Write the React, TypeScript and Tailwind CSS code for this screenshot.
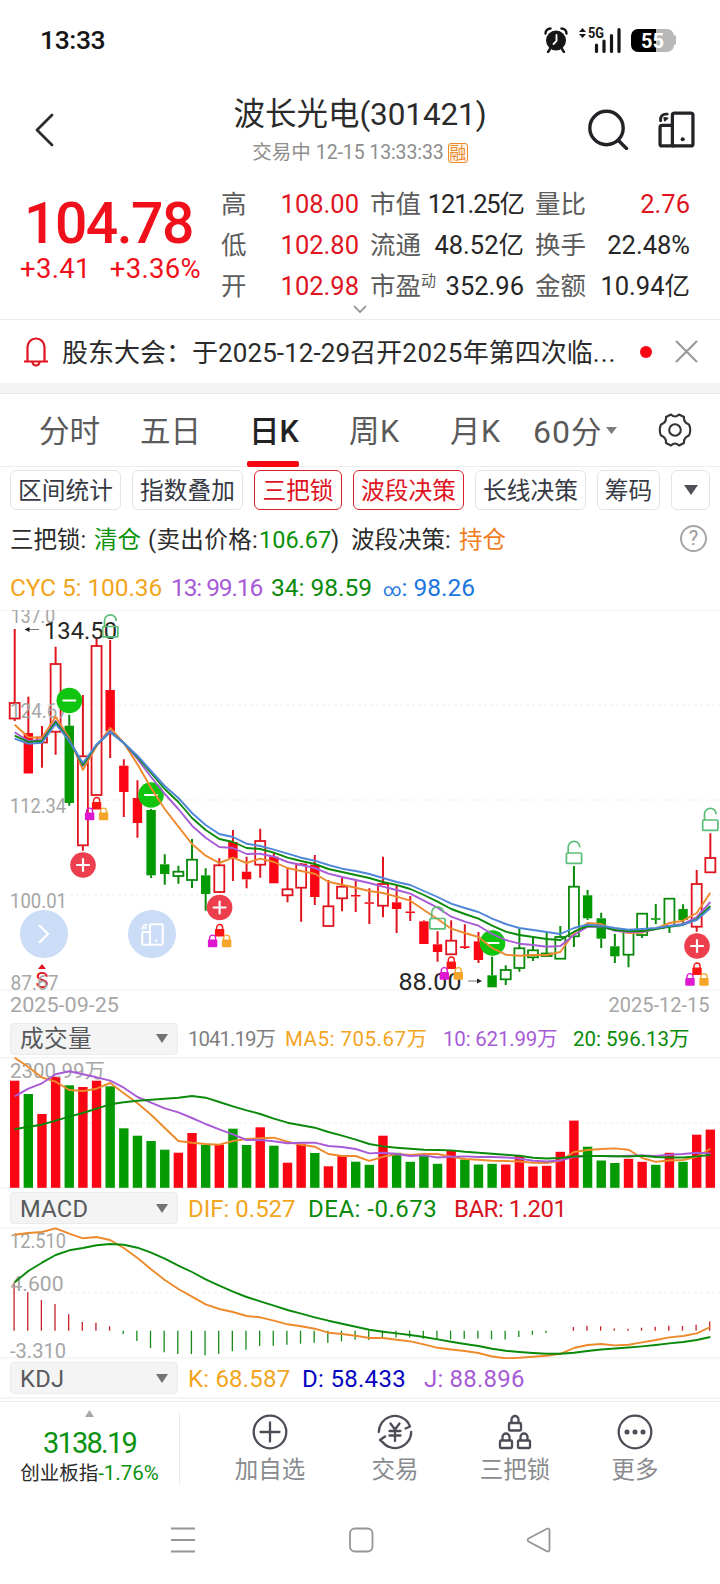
import type { ReactNode } from 'react'

const RED = '#e0141e'
const SOLID_RED = '#fa0514'
const GREEN = '#0a8a0a'
const SOLID_GREEN = '#039a03'
const ORANGE = '#ee8a2c'
const PURPLE = '#a75bd6'
const BLUE = '#4f86d9'

const STEP = 13.64
const cx = (i: number) => 14.7 + STEP * i

// kind: R/G = colour, h = hollow, f = filled, then high, top, bottom, low
type Candle = [string, number, number, number, number]

const candles: Candle[] = [
  ['Rh', 629, 703, 718.5, 721], ['Rf', 696.7, 733, 773.5, 773.5], ['Rh', 726, 737.5, 742.5, 767.7], ['Rh', 646.7, 664, 731.7, 754.7],
  ['Gf', 714.7, 725.7, 803, 805.7], ['Rh', 695, 756.3, 845.3, 850.7], ['Rh', 639, 646, 795, 795], ['Rf', 640, 690, 731, 758],
  ['Rf', 759.3, 765.7, 792, 817], ['Rf', 780.3, 798, 823, 837.7], ['Gf', 809, 810, 875.3, 878], ['Gf', 854.3, 864.3, 874, 884.7],
  ['Gh', 865.7, 871.7, 876, 883.7], ['Gh', 839, 859.7, 880, 888], ['Gf', 868.3, 875.3, 894, 910.7], ['Rh', 858.3, 865.3, 892, 893],
  ['Rf', 830, 842, 858, 881], ['Rf', 856.7, 871.7, 879.3, 888.3], ['Rh', 828.7, 841, 864.7, 877.7], ['Rf', 853, 856.7, 883.3, 883.3],
  ['Rh', 868, 889.3, 895.3, 902.3], ['Rh', 863, 864.5, 887.7, 921.7], ['Rf', 855, 864.7, 897, 905], ['Rh', 880, 906.3, 926, 926],
  ['Rh', 877.7, 886.7, 898.3, 911.3], ['Rf', 880.7, 895, 896.5, 912], ['Rf', 888.3, 902.3, 903.8, 924], ['Rh', 856.7, 884, 905.7, 917.3],
  ['Rf', 885.3, 902.3, 909, 933], ['Rf', 896, 911.5, 913, 921], ['Rf', 920.3, 921.3, 944, 944], ['Rf', 931.3, 944.3, 952, 961.7],
  ['Rh', 920.3, 940.7, 954.3, 954.3], ['Rf', 924.3, 946.3, 948, 949], ['Rf', 932, 941.3, 960, 963], ['Gf', 956.7, 975.3, 987.3, 987.3],
  ['Gh', 965.3, 970, 979.3, 985], ['Gh', 928, 948.3, 968, 971.7], ['Gh', 936.7, 950.3, 957.3, 961], ['Gh', 931.7, 953.5, 956, 956],
  ['Gh', 926, 937, 958.7, 958.7], ['Gh', 866, 886.7, 936.3, 947], ['Gf', 890, 895.3, 918.3, 920], ['Gf', 912.7, 918.3, 938.7, 948],
  ['Gf', 934, 946.3, 956.3, 963], ['Gh', 931, 932, 954.7, 967.3], ['Gh', 913, 913.7, 935, 938], ['Gf', 904, 918.2, 919.8, 924],
  ['Gh', 898, 898.7, 926, 933], ['Gf', 904.3, 909, 920, 923], ['Rh', 870, 884, 926.7, 931.7], ['Rh', 833.3, 858, 872.3, 873],
]

const cyc5 = [724.7, 737.3, 737.7, 716.7, 738, 770, 746, 728, 743, 764.3, 788, 809, 826.7, 844, 855.7, 863, 857.7, 863, 858.7, 862, 868, 871, 873.7, 881.7, 884.7, 887.7, 891, 893, 896.7, 900.7, 910, 919, 928.7, 933, 937, 948, 954.7, 955.7, 955, 955, 952, 933, 923, 924, 930, 933, 932.7, 928.7, 923, 920.7, 913, 892.7]
const cyc13 = [732.3, 741, 740, 720.7, 739.5, 766, 745, 731, 743, 759, 777, 794, 809, 825.7, 837.7, 847, 848, 854, 853.7, 856.7, 862, 865, 868, 873.7, 877, 880, 883, 886.7, 890, 893.7, 900.7, 907.7, 916.7, 921.7, 925.7, 934, 940, 943.7, 945, 946.7, 946, 935, 926.7, 926.7, 930.7, 932, 931.7, 929, 926, 924, 917, 902]
const cyc34 = [735.7, 742, 741, 722, 740, 765, 745, 732, 743, 757, 773, 789, 802, 818, 830, 839, 842, 848, 849, 852.7, 857.7, 861, 864, 869, 872, 875, 878, 882, 885, 889, 895, 901.7, 909, 914, 918.7, 925.7, 931.7, 935, 937, 939, 940, 931.7, 926, 926.3, 930, 931, 931, 929, 926.7, 925, 919, 906]
const cycAll = [738.7, 743.7, 742.7, 724, 741, 763, 744.5, 732, 743, 755.7, 771, 786, 798, 813, 825, 834, 837, 843.7, 846, 849.7, 853.7, 857.7, 860.7, 865, 868.7, 871, 874, 878, 882, 885, 891, 897, 903.7, 908, 912, 918.7, 924, 928, 930, 932, 934, 928, 924.7, 925.7, 928, 929.7, 929, 928, 926, 924.7, 920, 908]

const volColors = 'RGRRGRRGGGGGRRGRGGRGRRGRRGGRGGGGRGGGRRRRRRGGGRRGRGRR'
const volTops = [1080.7, 1094, 1114, 1076.7, 1085.3, 1087, 1080.7, 1086.3, 1128.3, 1135.7, 1141, 1149.7, 1152.7, 1133, 1145, 1144.7, 1128.7, 1145, 1127.3, 1145.7, 1162.7, 1143.7, 1153, 1166.3, 1156, 1161.7, 1164.8, 1135.7, 1152.8, 1161.8, 1156, 1163.8, 1150.8, 1159.5, 1164.5, 1163.8, 1164.5, 1156, 1166.5, 1165.8, 1151.8, 1120.6, 1146.7, 1160.5, 1163, 1158.8, 1161.8, 1164.8, 1152.8, 1161.8, 1134.7, 1129.6]
const vol5 = [1057.7, 1067, 1077.5, 1081.7, 1090, 1091, 1088.7, 1083, 1093.3, 1103.3, 1114.7, 1128, 1141, 1142.7, 1144, 1144.7, 1141, 1139, 1138.3, 1137.7, 1141.7, 1144.7, 1146.7, 1154, 1156, 1156, 1160.8, 1156.8, 1154, 1155, 1154, 1154, 1156.8, 1159, 1159.8, 1160.8, 1161, 1161.5, 1162.8, 1163, 1160.8, 1152, 1150, 1149, 1148.4, 1149.7, 1158, 1161.8, 1160.5, 1160, 1156.8, 1148.7]
const vol10 = [1096.3, 1088.7, 1083.3, 1074.3, 1071.3, 1074.3, 1077.3, 1080.7, 1087.7, 1097, 1102.7, 1108.3, 1112.3, 1118, 1124, 1129.3, 1134.3, 1140, 1140, 1141.3, 1143.3, 1142.7, 1142.7, 1146, 1147, 1149, 1153.4, 1152.8, 1154, 1156, 1155.4, 1157.5, 1156.8, 1156.4, 1157, 1157, 1157.5, 1158.5, 1160.8, 1161.5, 1160.5, 1156.8, 1156, 1156, 1156.4, 1155.8, 1155.4, 1156, 1154.8, 1154, 1152.8, 1153.4]
const vol20 = [1129.3, 1126.7, 1124.7, 1120.7, 1116.7, 1113, 1108.7, 1104.3, 1102.3, 1100.7, 1099.7, 1098.7, 1097.7, 1096, 1097.7, 1102, 1106.3, 1110.3, 1114, 1118.7, 1122.7, 1125.3, 1127.7, 1132, 1135.7, 1139.7, 1144, 1146.4, 1147.7, 1148.7, 1149.7, 1150, 1150.4, 1151.8, 1152.8, 1153.8, 1154.8, 1155.8, 1157.8, 1158.5, 1158, 1156.5, 1156, 1156, 1156.3, 1156.5, 1155.8, 1157, 1157.5, 1157.5, 1156.4, 1155]

const ZERO = 1330.7
const macdBars = [1282.3, 1292.3, 1300, 1304, 1314.3, 1322, 1322.7, 1326.3, 1334, 1341, 1348, 1352.3, 1354, 1354, 1355.3, 1353.7, 1351.3, 1349.7, 1346, 1345.7, 1344.7, 1343.7, 1342.7, 1342.7, 1341.3, 1339.7, 1340, 1337.4, 1337.4, 1337.4, 1338.7, 1339.4, 1339.4, 1338.7, 1338.4, 1339.4, 1339.4, 1337, 1334.7, 1333, 1330.7, 1327, 1325.7, 1326.3, 1328.4, 1328.7, 1327.7, 1326.7, 1325.7, 1326, 1324.7, 1321.6]
const dif = [1234.7, 1233, 1232, 1228.3, 1233.7, 1238.3, 1237, 1240, 1248, 1258, 1269.3, 1280, 1289, 1296.7, 1304.3, 1309, 1312, 1316, 1317.3, 1320.7, 1324.3, 1326.3, 1328.7, 1332.7, 1334, 1335.7, 1338, 1338, 1339.7, 1341.4, 1344.4, 1347.8, 1349.5, 1351, 1353, 1356.5, 1358.3, 1357.8, 1356.8, 1355.8, 1353.8, 1348, 1345, 1344, 1345.4, 1344.8, 1342.4, 1340, 1337.4, 1336, 1333.4, 1327]
const dea = [1282.3, 1271, 1262.7, 1255, 1250.3, 1248, 1245.3, 1244, 1244.7, 1247.7, 1252.7, 1258.7, 1265.7, 1272, 1279.3, 1285.7, 1291.7, 1297, 1301.3, 1305.7, 1310, 1313.7, 1317.3, 1320.7, 1323.7, 1326.7, 1329.7, 1331.7, 1333.4, 1335, 1337, 1339.4, 1341.8, 1344, 1346, 1348.8, 1350.8, 1352, 1353, 1353.8, 1353.8, 1352.8, 1351, 1349.5, 1348.5, 1347.5, 1346.4, 1345, 1343.4, 1342, 1340, 1337]

function Line({ data, color }: { data: number[]; color: string }) {
  return (
    <polyline
      points={data.map((y, i) => `${cx(i)},${y}`).join(' ')}
      fill="none"
      stroke={color}
      strokeWidth="1.9"
      strokeLinejoin="round"
    />
  )
}

function Grid({ solid, dashed }: { solid: number[]; dashed: number[] }) {
  return (
    <g stroke="#f4f4f4" strokeWidth="1.6">
      {solid.map((y) => <line key={y} x1="0" x2="720" y1={y} y2={y} />)}
      {dashed.map((y) => <line key={y} x1="10" x2="720" y1={y} y2={y} strokeDasharray="3 3" />)}
    </g>
  )
}

interface LabelProps {
  x: number
  y: number
  w: number
  size?: number
  fill?: string
  children: string
}

function Label({ x, y, w, size = 20, fill = '#a6a6a6', children }: LabelProps) {
  return (
    <text x={x} y={y} textLength={w} lengthAdjust="spacingAndGlyphs" fontSize={size} fill={fill}>
      {children}
    </text>
  )
}

function Badge({ x, y, plus }: { x: number; y: number; plus?: boolean }) {
  return (
    <g transform={`translate(${x} ${y})`} stroke="#fff" strokeWidth="2.2" strokeLinecap="round">
      <circle r="12.8" fill={plus ? '#ec3e4c' : '#10c510'} stroke="none" />
      <path d={plus ? 'M-6 0H6M0-6V6' : 'M-6 0H6'} />
    </g>
  )
}

function LockTrio({ x, y }: { x: number; y: number }) {
  const items: [number, number, string][] = [[0, 0, '#fb1414'], [-7, 10.6, '#dd18cf'], [7, 10.6, '#f5a62a']]
  return (
    <g transform={`translate(${x} ${y})`}>
      {items.map(([dx, dy, c]) => (
        <g key={c} transform={`translate(${dx} ${dy})`}>
          <path d="M-3 6V3.5a3 3 0 0 1 6 0V6" fill="none" stroke={c} strokeWidth="1.4" />
          <rect x="-4.7" y="5" width="9.4" height="7.6" rx="1" fill={c} />
        </g>
      ))}
    </g>
  )
}

function OpenLock({ x, y }: { x: number; y: number }) {
  return (
    <g transform={`translate(${x} ${y})`} fill="none" stroke="#5cbd78" strokeWidth="1.7">
      <rect x="-7.6" y="12" width="15.2" height="10.4" rx="1" />
      <path d="M-5.8 12V6.5a5.8 5.8 0 0 1 11.6-.8" strokeLinecap="round" />
    </g>
  )
}

function DeviceIcon({ className }: { className: string }) {
  return (
    <svg viewBox="0 0 36 36" className={className} fill="none" stroke="currentColor" strokeWidth="3.2" strokeLinejoin="round">
      <rect x="14" y="2" width="20" height="32" rx="2" />
      <path d="M14 14H4a2 2 0 0 0-2 2v16a2 2 0 0 0 2 2h12" />
      <path d="M2.500 9.500V8a5 5 0 0 1 5-5H9" strokeWidth="2.800" strokeLinecap="round" />
      <path d="M6 6.500L9.500 7L6.500 9.500z" strokeWidth="1.500" fill="currentColor" />
      <circle cx="24" cy="27.500" r="2" fill="currentColor" stroke="none" />
    </svg>
  )
}

function StatusBar() {
  return (
    <div className="flex h-20 items-center justify-between pl-10 pr-[44px]">
      <span className="text-[26.5px] font-medium leading-none tracking-[-0.4px] text-[#161616]">13:33</span>
      <div className="flex items-center">
        <svg className="h-[26px] w-6" viewBox="0 0 24 26">
          <circle cx="12" cy="13.5" r="10" fill="#161616" />
          <path d="M1.5 6.5a5 5 0 0 1 5-5M22.500 6.500a5 5 0 0 0-5-5M6 22l-2 3M18 22l2 3" stroke="#161616" strokeWidth="2.4" strokeLinecap="round" fill="none" />
          <path d="M12.500 8v6l-3 3" stroke="#fff" strokeWidth="1.8" fill="none" strokeLinecap="round" />
        </svg>
        <svg className="ml-[11px] h-[26px] w-[43px] overflow-visible" viewBox="0 0 43 26">
          <path d="M0 5l3.500-4 3.500 4zM0 7l3.500 4 3.500-4z" fill="#161616" />
          <text x="9" y="11" fontSize="14.500" fontWeight="700" textLength="16" lengthAdjust="spacingAndGlyphs" fill="#161616">5G</text>
          <path d="M17.500 18v6.500M25 14v10.500M32.500 8.500v16M40 2.500v22" stroke="#161616" strokeWidth="3.2" strokeLinecap="round" />
        </svg>
        <div className="ml-[9px] mt-[1px] flex h-[23px] w-[43px] items-center justify-center overflow-hidden rounded-[7px] bg-[linear-gradient(90deg,#000_57%,#b8b8b8_57%)] text-[20px] font-bold leading-none text-white">
          55
        </div>
        <div className="h-2.5 w-[2px] rounded-r bg-[#b8b8b8]" />
      </div>
    </div>
  )
}

function Header() {
  return (
    <div className="flex h-[100px] items-start justify-between pl-[35px] pr-[25px]">
      <svg className="mt-8 h-[36px] w-5" viewBox="0 0 20 36" fill="none" stroke="#2b2b2b" strokeWidth="2.8" strokeLinecap="round" strokeLinejoin="round">
        <path d="M17 3L2 18l15 15" />
      </svg>
      <div className="ml-[77px] flex flex-col items-center pt-[17px] text-[#2b2b2b]">
        <div className="whitespace-nowrap text-[31.500px] leading-9">波长光电<span className="tracking-[-0.1px]">(301421)</span></div>
        <div className="mt-[10px] flex items-center whitespace-nowrap text-[19.500px] leading-5 text-[#8e8e8e]">
          交易中<span className="ml-[5px] tracking-[-0.100px]">12-15 13:33:33</span>
          <span className="ml-1 flex size-5 items-center justify-center rounded-[3px] border border-[#ee8a2c] bg-[#fff6ea] text-[17px] leading-none text-[#ee8a2c]">融</span>
        </div>
      </div>
      <div className="mt-[29px] flex items-center gap-[29px] text-[#222326]">
        <svg className="size-[41px]" viewBox="0 0 41 41" fill="none" stroke="currentColor" strokeWidth="3.4" strokeLinecap="round">
          <circle cx="18.500" cy="19" r="16.700" />
          <path d="M31 32l7.500 7.500" />
        </svg>
        <DeviceIcon className="size-[37px]" />
      </div>
    </div>
  )
}

const quotes: [string, string, boolean][] = [
  ['高', '108.00', true], ['市值', '121.25亿', false], ['量比', '2.76', true],
  ['低', '102.80', true], ['流通', '48.52亿', false], ['换手', '22.48%', false],
  ['开', '102.98', true], ['市盈', '352.96', false], ['金额', '10.94亿', false],
]

function Quote() {
  return (
    <div className="relative flex h-[140px] border-b border-[#ebebeb]">
      <div className="w-[221px] shrink-0 whitespace-nowrap pl-5 text-[#f0101c]">
        <div className="mt-[15px] pl-[4px] text-[57px] font-medium leading-[58px] tracking-[-1.500px]">104.78</div>
        <div className="flex gap-[19px] text-[27.500px] leading-8 tracking-[0.300px]">
          <span>+3.41</span>
          <span>+3.36%</span>
        </div>
      </div>
      <div className="grid h-[127px] grid-cols-[138px_154px_155px] grid-rows-3 gap-x-[11px] pt-1 text-[25.5px] leading-none">
        {quotes.map(([name, value, up]) => (
          <div key={name} className="flex items-center justify-between whitespace-nowrap">
            <span className="text-[#5c5c5c]">
              {name}
              {name === '市盈' && <sup className="relative -top-[9px] align-baseline text-[15px]">动</sup>}
            </span>
            <span className={up ? 'text-[#e0141e]' : name === '市值' ? 'tracking-[-1.100px] text-[#262626]' : 'text-[#262626]'}>{value}</span>
          </div>
        ))}
      </div>
      <svg className="absolute left-[353px] top-[125px] h-2.5 w-[14px]" viewBox="0 0 14 10" fill="none" stroke="#8a8a8a" strokeWidth="1.6">
        <path d="M1 1l6 6 6-6" />
      </svg>
    </div>
  )
}

function Notice() {
  return (
    <div className="flex h-[63px] items-center pl-6 pr-[22px]">
      <svg className="h-[31px] w-6" viewBox="0 0 24 31" fill="none" stroke={RED} strokeWidth="2.200">
        <path d="M3.500 25V11a8.500 8.500 0 0 1 17 0v14M0 25.500h24M8.500 26a3.500 3.500 0 0 0 7 0" />
      </svg>
      <span className="ml-[14px] w-[562px] whitespace-nowrap pt-[2px] text-[26px] leading-none text-[#2b2b2b]">
        股东大会：于<span className="tracking-[0.100px]">2025-12-29</span>召开<span className="tracking-[0.500px]">2025</span>年第四次临<span className="tracking-[1px]">...</span>
      </span>
      <span className="ml-4 size-3 rounded-full bg-[#fa0514]" />
      <svg className="ml-auto size-[23px]" viewBox="0 0 23 23" stroke="#9a9a9a" strokeWidth="2.200">
        <path d="M1 1l21 21M22 1L1 22" />
      </svg>
    </div>
  )
}

function Tabs() {
  return (
    <div className="flex h-[73px] items-center whitespace-nowrap border-b border-[#ededed] text-[30.5px] leading-none text-[#5a5a5a] [&>span]:pt-1">
      <span className="w-[101px] pl-[39px]">分时</span>
      <span className="ml-[39px] w-[109px]">五日</span>
      <span className="relative w-[100px] font-medium text-[#222]">
        日K
        <i className="absolute -bottom-[20px] -left-[2px] h-[6px] w-[52px] rounded-[2px] bg-[#fa0514]" />
      </span>
      <span className="w-[101px] tracking-[0.500px]">周K</span>
      <span className="w-[83px] tracking-[0.500px]">月K</span>
      <span><span className="text-[32px] tracking-[1px]">60</span>分</span>
      <svg className="ml-[5px] h-[7px] w-[11px]" viewBox="0 0 11 7" fill="#7d7d7d"><path d="M0 0h11l-5.500 7z" /></svg>
      <svg className="ml-auto mr-[28px] size-[34px]" viewBox="0 0 34 34" fill="none" stroke="#333" strokeWidth="2.100" strokeLinejoin="round">
        <path d="M13 1.500Q17 5.500 21 1.500L26 4Q25.500 9.500 31 11.500Q33.500 17 31 22.500Q25.500 24.500 26 30L21 32.500Q17 28.500 13 32.500L8 30Q8.500 24.500 3 22.500Q.5 17 3 11.500Q8.500 9.500 8 4Z" />
        <circle cx="17" cy="17" r="5.800" />
      </svg>
    </div>
  )
}

function Chip({ children, active }: { children: ReactNode; active?: boolean }) {
  return (
    <div
      className={`flex h-10 w-full items-center justify-center rounded-md border-[1.5px] text-[23.700px] leading-none whitespace-nowrap [&>span]:pt-1 ${
        active ? 'border-[#d8232c] text-[#e0141e]' : 'border-[#e4e4e6] text-[#373a44]'
      }`}
    >
      {children}
    </div>
  )
}

function Select({ children }: { children: string }) {
  return (
    <div className="flex h-[32px] w-[168px] items-center justify-between rounded-[4px] border border-[#ebebeb] bg-[#f4f4f4] px-[9px] text-[23.700px] leading-none text-[#58595b]">
      <span className="pt-[3px] tracking-[0.300px]">{children}</span>
      <svg className="h-[9px] w-[12px]" viewBox="0 0 12 9" fill="#717274"><path d="M0 0h12l-6 9z" /></svg>
    </div>
  )
}

function CandleChart() {
  return (
    <svg className="block h-[410px] w-full" viewBox="0 610 720 410">
      <Grid solid={[610.500, 990]} dashed={[705, 800, 895]} />
      <polygon points="42,964 46,969 38,969" fill={RED} />
      <text x="42" y="987.500" textAnchor="middle" fontSize="22" fill={RED}>S</text>
      {candles.map(([kind, high, top, bottom, low], i) => {
        const x = cx(i)
        const red = kind[0] === 'R'
        const filled = kind[1] === 'f'
        return (
          <g key={i} stroke={red ? RED : GREEN} strokeWidth="2">
            <path d={`M${x} ${high}V${top}M${x} ${bottom}V${low}`} />
            {filled ? (
              <rect x={x - 4.700} y={top} width="9.4" height={bottom - top} fill={red ? SOLID_RED : SOLID_GREEN} stroke="none" />
            ) : (
              <rect x={x - 5} y={top} width="10" height={bottom - top} fill="none" strokeWidth="1.8" />
            )}
          </g>
        )
      })}
      <Label x={11} y={622.700} w={44}>137.0</Label>
      <Label x={10} y={717.700} w={58}>124.67</Label>
      <Label x={10} y={812.700} w={56}>112.34</Label>
      <Label x={10} y={907.700} w={57}>100.01</Label>
      <Label x={10.500} y={990} w={48}>87.67</Label>
      <Label x={44} y={639} w={73} size={24} fill="#262626">134.50</Label>
      <Label x={398.500} y={990} w={63} size={24} fill="#262626">88.00</Label>
      <path d="M28 629.500H39M468 981H477" stroke="#777" strokeWidth="1" />
      <path d="M24.500 629.500l5-2.500v5zM482 981l-5-2.500v5z" fill="#222" />
      <Badge x={69.300} y={700.500} />
      <Badge x={151} y={795} />
      <Badge x={492.500} y={943} />
      <Line data={cyc5} color={ORANGE} />
      <Line data={cyc13} color={PURPLE} />
      <Line data={cyc34} color={GREEN} />
      <Line data={cycAll} color={BLUE} />
      <Badge x={83} y={865} plus />
      <Badge x={219.600} y={907.500} plus />
      <Badge x={697} y={946} plus />
      <OpenLock x={110.300} y={614.500} />
      <OpenLock x={437.500} y={906.500} />
      <OpenLock x={574} y={841} />
      <OpenLock x={710.300} y={808} />
      <LockTrio x={96.600} y={797} />
      <LockTrio x={219.600} y={924} />
      <LockTrio x={451.300} y={956.500} />
      <LockTrio x={697} y={962.500} />
      <Label x={10} y={1012} w={109}>2025-09-25</Label>
      <Label x={608.500} y={1012} w={101}>2025-12-15</Label>
    </svg>
  )
}

function VolumeChart() {
  return (
    <svg className="block h-[132px] w-full" viewBox="0 1057 720 132">
      <Grid solid={[1057.700, 1188]} dashed={[1123]} />
      {volTops.map((y, i) => (
        <rect key={i} x={cx(i) - 4.700} y={y} width="9.4" height={1187.800 - y} fill={volColors[i] === 'R' ? SOLID_RED : SOLID_GREEN} />
      ))}
      <Label x={10} y={1078} w={95}>2300.99万</Label>
      <Line data={vol5} color={ORANGE} />
      <Line data={vol10} color={PURPLE} />
      <Line data={vol20} color={GREEN} />
    </svg>
  )
}

function MacdChart() {
  return (
    <svg className="block h-[132px] w-full" viewBox="0 1227 720 132">
      <Grid solid={[1228, 1357.800]} dashed={[1292.700]} />
      {macdBars.map((y, i) => (
        <path key={i} d={`M${cx(i) - 0.600} ${ZERO}V${y}`} stroke={y < ZERO ? '#c9202b' : '#178a17'} strokeWidth="1.3" />
      ))}
      <Label x={10} y={1248} w={56}>12.510</Label>
      <Label x={10.500} y={1291} w={53}>4.600</Label>
      <Label x={10} y={1358} w={56}>-3.310</Label>
      <Line data={dif} color={ORANGE} />
      <Line data={dea} color={GREEN} />
    </svg>
  )
}

const toolIcons: Record<string, ReactNode> = {
  加自选: (
    <>
      <circle cx="18" cy="18" r="16.300" />
      <path d="M18 8.500v19M8.500 18h19" />
    </>
  ),
  交易: (
    <>
      <path d="M1.800 18A16.200 16.200 0 0 1 31 8.500L33 12.500L28.500 14.500M34.200 18A16.200 16.200 0 0 1 5 27.500L3 26L8 22.500" />
      <path d="M13.500 9.500l4.500 6 4.500-6M18 15.500V27M12.500 17h11M12.500 21.500h11" />
    </>
  ),
  三把锁: (
    <>
      <rect x="12" y="9" width="12" height="7.500" rx="1" />
      <path d="M14.500 9V5.500a3.500 3.500 0 0 1 7 0V9" />
      <rect x="3" y="26.500" width="12" height="7.500" rx="1" />
      <path d="M5.500 26v-3a3.500 3.500 0 0 1 7 0V26" />
      <rect x="21" y="26.500" width="12" height="7.500" rx="1" />
      <path d="M23.500 26v-3a3.500 3.500 0 0 1 7 0V26" />
    </>
  ),
  更多: (
    <>
      <circle cx="18" cy="18" r="16.300" />
      <g fill="#4c4d57" stroke="none">
        <circle cx="10" cy="18" r="2.500" />
        <circle cx="18" cy="18" r="2.500" />
        <circle cx="26" cy="18" r="2.500" />
      </g>
    </>
  ),
}

function BottomBar() {
  return (
    <div className="flex h-[94px] border-t border-[#ececec]">
      <div className="my-[10px] flex w-[180px] flex-col items-center border-r border-[#ececec]">
        <svg className="-mt-[2px] h-[7px] w-[9px] shrink-0" viewBox="0 0 9 6" fill="#a8a8a8" preserveAspectRatio="none"><path d="M4.500 0L9 6H0z" /></svg>
        <div className="mt-[10px] text-[29px] leading-8 tracking-[-1.800px] text-[#0a9210]">3138.19</div>
        <div className="mt-[2px] text-[19.500px] leading-6 text-[#2b2b2b]">
          创业板指<span className="text-[20.500px] text-[#0a9210]">-1.76%</span>
        </div>
      </div>
      <div className="grid grid-cols-[130px_120px_120px_120px] pl-[25px]">
        {Object.entries(toolIcons).map(([name, icon]) => (
          <div key={name} className="flex flex-col items-center pt-[12px]">
            <svg className="size-9" viewBox="0 0 36 36" fill="none" stroke="#4c4d57" strokeWidth="2.300" strokeLinecap="round" strokeLinejoin="round">
              {icon}
            </svg>
            <span className="mt-[8px] text-[23.500px] leading-6 text-[#8a8b8f]">{name}</span>
          </div>
        ))}
      </div>
    </div>
  )
}

function SystemNav() {
  return (
    <div className="flex h-[89px] items-start pt-8 pl-[170px]">
      <svg className="h-[26px] w-[381px]" viewBox="0 0 381 26" fill="none" stroke="#969696" strokeWidth="2">
        <path d="M1 1.500h24M1 13h24M1 24.500h24" />
        <rect x="180" y="1.500" width="22.500" height="23" rx="5" strokeWidth="1.800" />
        <path d="M377 1.700L358.500 11.500a1.800 1.800 0 0 0 0 3L377 24.300Q379.500 25 379.500 22.500V3.500Q379.500 1 377 1.700Z" strokeWidth="1.800" />
      </svg>
    </div>
  )
}

export default function App() {
  return (
    <div className="relative h-[1584px] w-[720px] overflow-hidden bg-white font-[Roboto,'Noto_Sans_CJK_SC',sans-serif]">
      <StatusBar />
      <Header />
      <Quote />
      <Notice />
      <div className="h-[11px] border-b border-[#e9e9e9] bg-[#f4f4f4]" />
      <Tabs />

      <div className="grid h-[45px] grid-cols-[111px_111px_88px_111px_111px_63px_39px] items-center gap-[11px] pl-[10px]">
        <Chip><span>区间统计</span></Chip>
        <Chip><span>指数叠加</span></Chip>
        <Chip active><span>三把锁</span></Chip>
        <Chip active><span>波段决策</span></Chip>
        <Chip><span>长线决策</span></Chip>
        <Chip><span>筹码</span></Chip>
        <Chip><svg className="h-[10px] w-[14px]" viewBox="0 0 14 10" fill="#4f505a"><path d="M0 0h14L7 10z" /></svg></Chip>
      </div>

      <div className="flex h-[54px] items-center whitespace-nowrap pl-[10px] pr-[13px] text-[23.500px] leading-none text-[#2b2b2b]">
        <div className="flex pt-[3px]">
          <span className="w-[84px]">三把锁:</span>
          <span className="w-[54px] text-[#0a920a]">清仓</span>
          <span className="w-[111px] tracking-[0.400px]">(卖出价格:</span>
          <span className="w-[72px] text-[#0a920a]">106.67</span>
          <span className="w-[20px]">)</span>
          <span className="w-[108px]">波段决策:</span>
          <span className="text-[#f07d1c]">持仓</span>
        </div>
        <span className="ml-auto -mt-[2px] flex size-[27px] items-center justify-center rounded-full border-2 border-[#a5a5a5] text-xl leading-none text-[#999]">?</span>
      </div>

      <div className="flex h-11 items-center whitespace-nowrap pl-[10px] text-[24.500px] leading-none">
        <span className="w-[161px] tracking-[-0.100px] text-[#f2a51e]">CYC 5: 100.36</span>
        <span className="w-[100px] tracking-[-1.100px] text-[#a75bd6]">13: 99.16</span>
        <span className="w-[112px] text-[#0a8a0a]">34: 98.59</span>
        <span className="text-[#1a76e0]"><span className="text-[18px]">∞</span>: 98.26</span>
      </div>

      <div className="relative">
        <CandleChart />
        <div className="absolute left-5 top-[300px] flex size-12 items-center justify-center rounded-full bg-[#cbdcf6]">
          <svg className="h-5 w-3" viewBox="0 0 12 20" fill="none" stroke="#fff" strokeWidth="2.200"><path d="M1 1l9 9-9 9" /></svg>
        </div>
        <div className="absolute left-32 top-[300px] flex size-12 items-center justify-center rounded-full bg-[#cbdcf6] text-white">
          <DeviceIcon className="size-[23px]" />
        </div>
      </div>

      <div className="flex h-[37px] items-center whitespace-nowrap pl-[10px] text-[20.500px] leading-none [&>span]:pt-[2px]">
        <Select>成交量</Select>
        <span className="ml-[10px] w-[97px] tracking-[-1px] text-[#808080]">1041.19万</span>
        <span className="w-[158px] tracking-[0.500px] text-[#f2a51e]">MA5: 705.67万</span>
        <span className="w-[130px] tracking-[-0.200px] text-[#a75bd6]">10: 621.99万</span>
        <span className="text-[#0a8a0a]">20: 596.13万</span>
      </div>
      <VolumeChart />

      <div className="flex h-[38px] items-center whitespace-nowrap pl-[10px] text-[24px] leading-none [&>span]:pt-[2px]">
        <Select>MACD</Select>
        <span className="ml-[10px] w-[120px] text-[#f2a51e]">DIF: 0.527</span>
        <span className="w-[146px] tracking-[0.500px] text-[#0a8a0a]">DEA: -0.673</span>
        <span className="tracking-[-0.500px] text-[#d8141e]">BAR: 1.201</span>
      </div>
      <MacdChart />

      <div className="flex h-[40px] items-center whitespace-nowrap border-b-2 border-[#f5f5f5] pl-[10px] text-[24px] leading-none [&>span]:pt-[2px]">
        <Select>KDJ</Select>
        <span className="ml-[10px] w-[114px] tracking-[0.200px] text-[#f2a51e]">K: 68.587</span>
        <span className="w-[122px] tracking-[0.300px] text-[#0505c0]">D: 58.433</span>
        <span className="tracking-[0.200px] text-[#a75bd6]">J: 88.896</span>
      </div>
      <div className="h-[2px]" />
      <BottomBar />
      <SystemNav />
    </div>
  )
}
